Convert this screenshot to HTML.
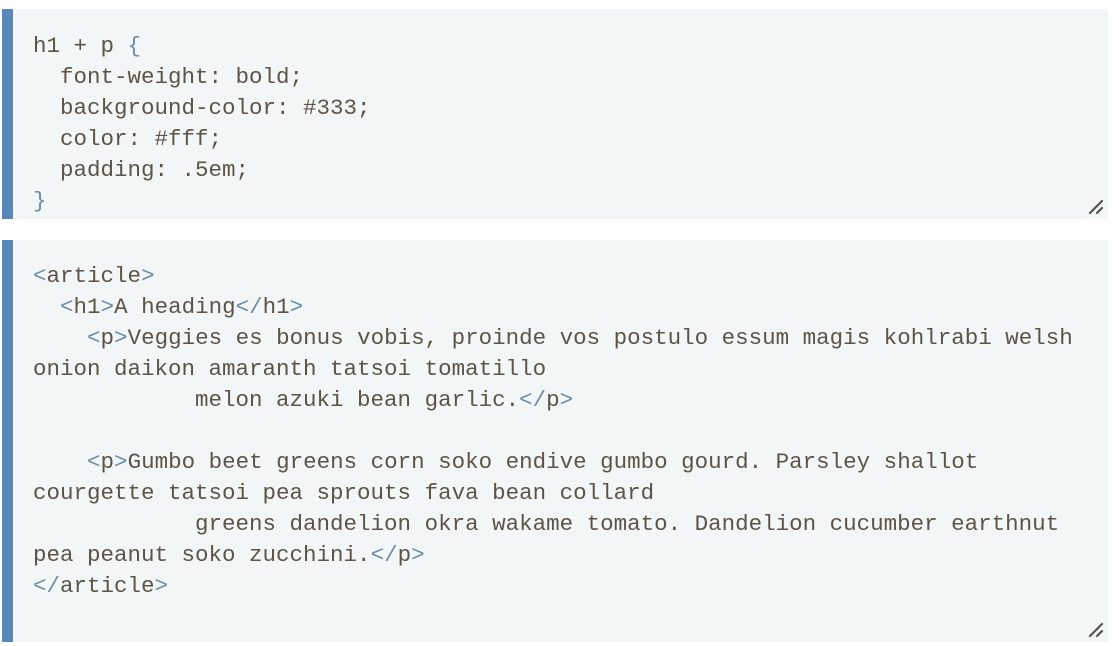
<!DOCTYPE html>
<html><head><meta charset="utf-8"><style>
html,body{margin:0;padding:0;background:#fff;width:1119px;height:646px;overflow:hidden}
.box{position:absolute;left:2px;width:1095px;background:#f3f6f6;border-left:11px solid #5887bb;}
pre{margin:0;font-family:"Liberation Mono","Noto Sans CJK SC",monospace;font-size:22.5px;line-height:31px;color:#5c5447;padding-left:20px;white-space:pre}
.t{color:#6d8ca6}
.g{position:absolute;right:4px;bottom:4px}
</style></head><body>
<div class="box" style="top:9px;height:210px">
<pre style="padding-top:22px">h1 + p <span class="t">{</span>
  font-weight: bold;
  background-color: #333;
  color: #fff;
  padding: .5em;
<span class="t">}</span></pre>
<svg class="g" width="16" height="16" viewBox="0 0 16 16"><path d="M2 14L14 2M9 14L14 9" stroke="#555" stroke-width="2.2" stroke-linecap="round"/></svg>
</div>
<div class="box" style="top:240px;height:402px">
<pre style="padding-top:21px"><span class="t">&lt;</span>article<span class="t">&gt;</span>
  <span class="t">&lt;</span>h1<span class="t">&gt;</span>A heading<span class="t">&lt;/</span>h1<span class="t">&gt;</span>
    <span class="t">&lt;</span>p<span class="t">&gt;</span>Veggies es bonus vobis, proinde vos postulo essum magis kohlrabi welsh
onion daikon amaranth tatsoi tomatillo
            melon azuki bean garlic.<span class="t">&lt;/</span>p<span class="t">&gt;</span>

    <span class="t">&lt;</span>p<span class="t">&gt;</span>Gumbo beet greens corn soko endive gumbo gourd. Parsley shallot
courgette tatsoi pea sprouts fava bean collard
            greens dandelion okra wakame tomato. Dandelion cucumber earthnut
pea peanut soko zucchini.<span class="t">&lt;/</span>p<span class="t">&gt;</span>
<span class="t">&lt;/</span>article<span class="t">&gt;</span></pre>
<svg class="g" width="16" height="16" viewBox="0 0 16 16"><path d="M2 14L14 2M9 14L14 9" stroke="#555" stroke-width="2.2" stroke-linecap="round"/></svg>
</div>
</body></html>
